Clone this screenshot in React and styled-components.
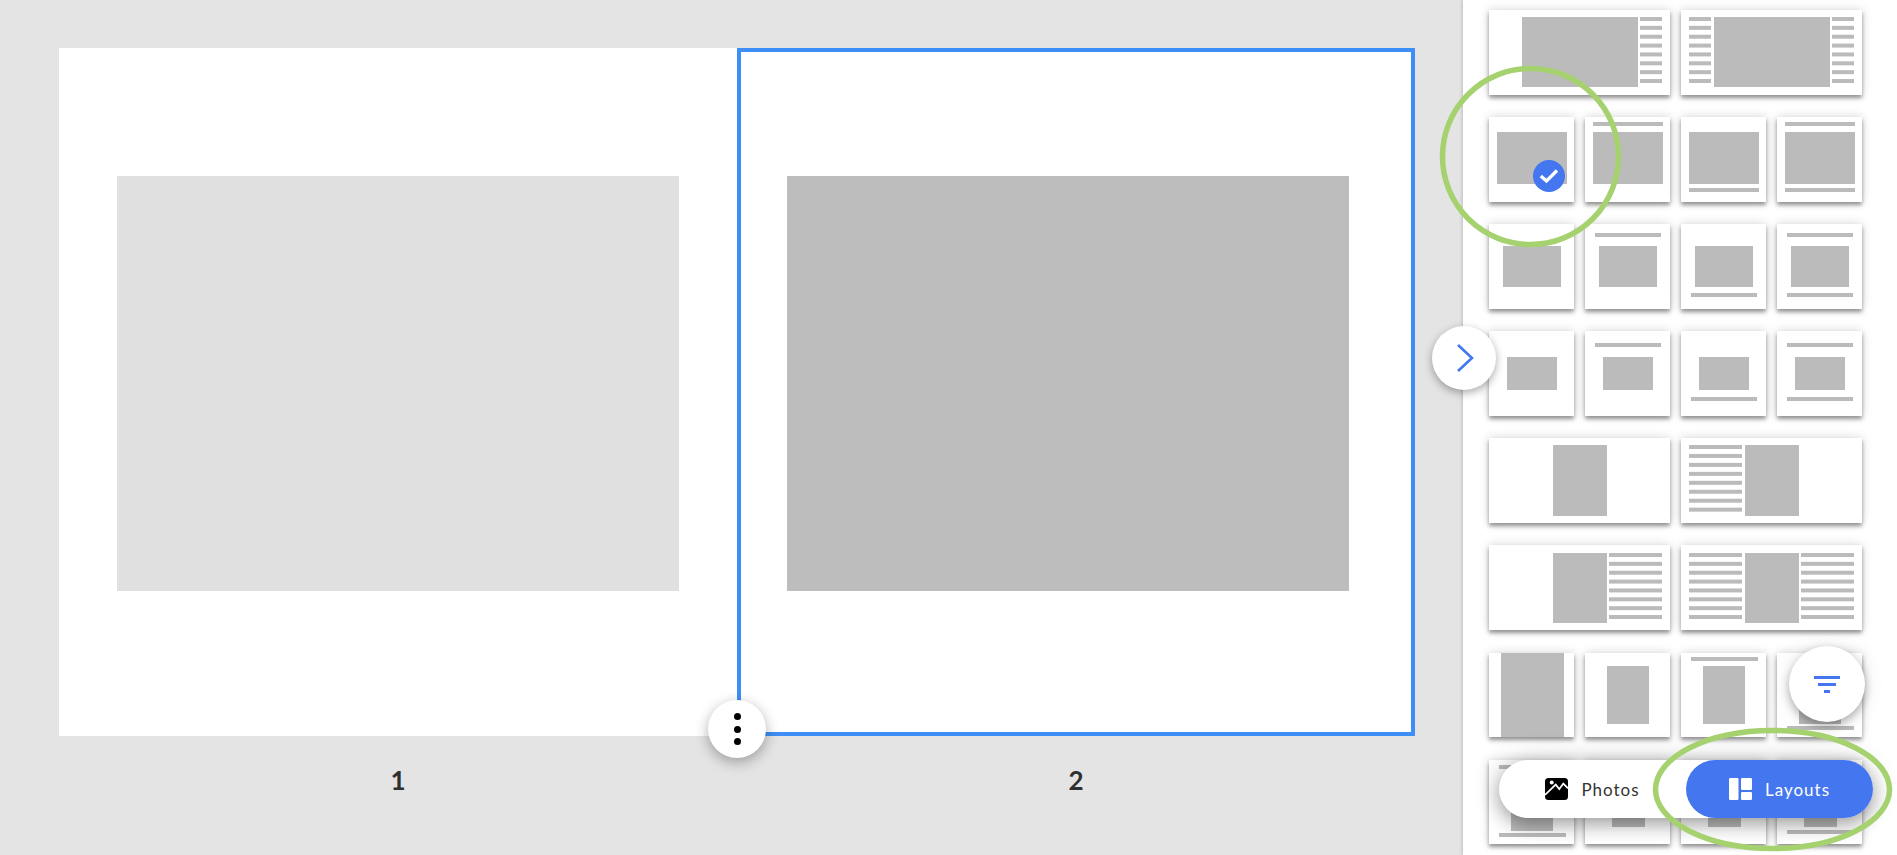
import React from 'react';
import styled, { createGlobalStyle } from 'styled-components';

const BLUE = '#4476f0';
const GREEN = '#a6d16f';
const GRAY = '#bbbbbb';

const GlobalStyle = createGlobalStyle`
  html, body {
    margin: 0;
    height: 100%;
    overflow: hidden;
    background: #e4e4e4;
    font-family: Lato, "Open Sans", sans-serif;
  }
`;

// Mini layout previews: every entry is a list of [x, y, w, h] blocks
const linesAt = (x, w, top, pitch = 8.86) =>
  Array.from({ length: 8 }, (_, i) => [x, top + i * pitch, w, 4]);

const squareSet = (photo, top, bottom, lineX = 10, lineW = 66) => [
  [[...photo]],
  [[lineX, top, lineW, 4], [...photo]],
  [[...photo], [lineX, bottom, lineW, 4]],
  [[lineX, top, lineW, 4], [...photo], [lineX, bottom, lineW, 4]],
];

const rows = [
  [
    { wide: true, blocks: [[33, 7, 116, 70], ...linesAt(151, 22, 7)] },
    { wide: true, blocks: [...linesAt(8, 22, 7), [33, 7, 116, 70], ...linesAt(151, 22, 7)] },
  ],
  squareSet([8, 15, 70, 52], 5, 71, 8, 70).map((blocks, i) => ({ blocks, checked: i === 0 })),
  squareSet([14, 22, 58, 41], 9, 69).map((blocks) => ({ blocks })),
  squareSet([18, 26, 50, 33], 12, 66).map((blocks) => ({ blocks })),
  [
    { wide: true, blocks: [[64, 7, 54, 71]] },
    { wide: true, blocks: [...linesAt(8, 53, 7, 8.95), [64, 7, 54, 71]] },
  ],
  [
    { wide: true, blocks: [[64, 8, 54, 70], ...linesAt(120, 53, 8)] },
    { wide: true, blocks: [...linesAt(8, 53, 8), [64, 8, 54, 70], ...linesAt(120, 53, 8)] },
  ],
  [
    { blocks: [[12, 0, 63, 85]] },
    { blocks: [[22, 13, 42, 58]] },
    { blocks: [[10, 4, 67, 4], [22, 13, 42, 58]] },
    { blocks: [[22, 13, 42, 58], [10, 73, 67, 4]] },
  ],
  [
    { blocks: [[10, 5, 67, 4], [22, 13, 42, 58], [10, 73, 67, 4]] },
    { blocks: [[27, 30, 33, 37]] },
    { blocks: [[10, 9, 66, 4], [27, 30, 33, 37]] },
    { blocks: [[27, 30, 33, 37], [10, 70, 67, 4]] },
  ],
];

const App = () => {
  return (
    <Screen>
      <GlobalStyle />
      <Canvas>
        <Spread>
          <Page>
            <PagePhoto />
          </Page>
          <Page $selected>
            <PagePhoto $active />
          </Page>
          <MenuButton aria-label="Page options">
            <Dot />
            <Dot />
            <Dot />
          </MenuButton>
        </Spread>
        <Numbers>
          <PageNumber>1</PageNumber>
          <PageNumber>2</PageNumber>
        </Numbers>
      </Canvas>

      <Sidebar>
        <CollapseButton aria-label="Collapse">
          <svg width="18" height="30" viewBox="0 0 18 30">
            <path d="M2 2 L16 15 L2 28" fill="none" stroke={BLUE} strokeWidth="2.6" />
          </svg>
        </CollapseButton>

        <ThumbGrid>
          {rows.flat().map((thumb, i) => (
            <Thumb key={i} $wide={thumb.wide}>
              <svg width={thumb.wide ? 181 : 85} height="85" viewBox={`0 0 ${thumb.wide ? 181 : 85} 85`}>
                {thumb.blocks.map(([x, y, w, h], j) => (
                  <rect key={j} x={x} y={y} width={w} height={h} fill={GRAY} />
                ))}
              </svg>
              {thumb.checked && (
                <CheckBadge>
                  <svg width="20" height="16" viewBox="0 0 20 16">
                    <path d="M1.8 8 L7.5 13 L18 2.5" fill="none" stroke="#fff" strokeWidth="3.4" />
                  </svg>
                </CheckBadge>
              )}
            </Thumb>
          ))}
        </ThumbGrid>

        <FilterButton aria-label="Filter">
          <svg width="26" height="17" viewBox="0 0 26 17" fill={BLUE}>
            <rect x="0" y="0" width="26" height="3" />
            <rect x="4" y="7" width="18" height="3" />
            <rect x="10" y="14" width="6" height="3" />
          </svg>
        </FilterButton>

        <Switcher>
          <SwitchTab>
            <svg width="23" height="22" viewBox="0 0 23 22">
              <rect width="23" height="22" rx="3.5" fill="#000" />
              <circle cx="6.7" cy="4.6" r="2" fill="#fff" />
              <path d="M0 17 L10.7 6.6 L14.3 11 L18.3 5.6 L23 10.3" fill="none" stroke="#fff" strokeWidth="1.7" />
            </svg>
            Photos
          </SwitchTab>
          <SwitchTab $active>
            <svg width="23" height="22" viewBox="0 0 23 22" fill="#fff">
              <rect x="0" y="0" width="9.5" height="22" rx="1.2" />
              <rect x="12" y="0" width="11" height="12" rx="1.2" />
              <rect x="12" y="14" width="11" height="8" rx="1.2" />
            </svg>
            Layouts
          </SwitchTab>
        </Switcher>
      </Sidebar>

      <Annotations width="1897" height="855" viewBox="0 0 1897 855">
        <circle cx="1530.5" cy="156.5" r="88" fill="none" stroke={GREEN} strokeWidth="5.5" />
        <ellipse cx="1772.5" cy="789.5" rx="117" ry="59" fill="none" stroke={GREEN} strokeWidth="5.5" />
      </Annotations>
    </Screen>
  );
};

const Screen = styled.div`
  position: relative;
  display: flex;
  width: 1897px;
  height: 855px;
  overflow: hidden;
  background: #e4e4e4;
`;

const Canvas = styled.main`
  flex: 0 0 1463px;
  box-sizing: border-box;
  padding: 48px 0 0 59px;
`;

const Spread = styled.div`
  position: relative;
  display: flex;
  width: 1356px;
  height: 688px;
`;

const Page = styled.section`
  box-sizing: border-box;
  width: 678px;
  height: 688px;
  padding: ${(p) => (p.$selected ? '124px 0 0 46px' : '128px 0 0 58px')};
  background: #fff;
  border: ${(p) => (p.$selected ? '4px solid #3d8ff7' : '0')};
`;

const PagePhoto = styled.div`
  width: 562px;
  height: 415px;
  background: ${(p) => (p.$active ? '#bdbdbd' : '#e0e0e0')};
`;

const RoundButton = styled.button`
  position: absolute;
  display: flex;
  align-items: center;
  justify-content: center;
  padding: 0;
  border: 0;
  border-radius: 50%;
  background: #fff;
`;

const MenuButton = styled(RoundButton)`
  left: 649px;
  top: 652px;
  flex-direction: column;
  gap: 5.5px;
  width: 58px;
  height: 58px;
  box-shadow: 0 4px 14px rgba(0, 0, 0, 0.32);
`;

const Dot = styled.span`
  width: 7px;
  height: 7px;
  border-radius: 50%;
  background: #000;
`;

const Numbers = styled.div`
  display: flex;
  width: 1356px;
  margin-top: 29px;
`;

const PageNumber = styled.div`
  width: 678px;
  text-align: center;
  font-size: 26px;
  line-height: 30px;
  font-weight: 700;
  color: #2f2f2f;
`;

const Sidebar = styled.aside`
  position: relative;
  flex: 1;
  box-sizing: border-box;
  padding: 10px 0 0 26px;
  background: #fff;
  box-shadow: -1px 0 3px rgba(0, 0, 0, 0.16);
`;

const CollapseButton = styled(RoundButton)`
  left: -31px;
  top: 326px;
  z-index: 2;
  width: 64px;
  height: 64px;
  padding-left: 2px;
  box-shadow: 0 3px 8px rgba(0, 0, 0, 0.34);
`;

const ThumbGrid = styled.div`
  display: grid;
  grid-template-columns: repeat(4, 85px);
  grid-auto-rows: 84.6px;
  column-gap: 11px;
  row-gap: 22.5px;
`;

const Thumb = styled.div`
  position: relative;
  grid-column: ${(p) => (p.$wide ? 'span 2' : 'span 1')};
  background: #fff;
  overflow: hidden;
  box-shadow: 0 3px 4px rgba(0, 0, 0, 0.38), 0 0 10px rgba(0, 0, 0, 0.16);

  svg {
    display: block;
  }
`;

const CheckBadge = styled.span`
  position: absolute;
  left: 44px;
  top: 43px;
  display: flex;
  align-items: center;
  justify-content: center;
  width: 32px;
  height: 32px;
  border-radius: 50%;
  background: ${BLUE};
`;

const FilterButton = styled(RoundButton)`
  right: 32px;
  bottom: 133px;
  z-index: 2;
  width: 76px;
  height: 76px;
  box-shadow: 0 4px 10px rgba(0, 0, 0, 0.3), 0 0 24px rgba(0, 0, 0, 0.08);
`;

const Switcher = styled.div`
  position: absolute;
  right: 24px;
  bottom: 37px;
  z-index: 2;
  display: flex;
  width: 374px;
  height: 58px;
  border-radius: 29px;
  background: #fff;
  box-shadow: 0 6px 18px rgba(0, 0, 0, 0.32), 0 0 30px rgba(0, 0, 0, 0.14);
`;

const SwitchTab = styled.div`
  flex: 1;
  display: flex;
  align-items: center;
  justify-content: center;
  gap: 13px;
  border-radius: 29px;
  font-size: 17px;
  letter-spacing: 1px;
  color: ${(p) => (p.$active ? '#fff' : '#333')};
  background: ${(p) => (p.$active ? BLUE : 'transparent')};
`;

const Annotations = styled.svg`
  position: absolute;
  left: 0;
  top: 0;
  z-index: 3;
  pointer-events: none;
`;

export default App;
